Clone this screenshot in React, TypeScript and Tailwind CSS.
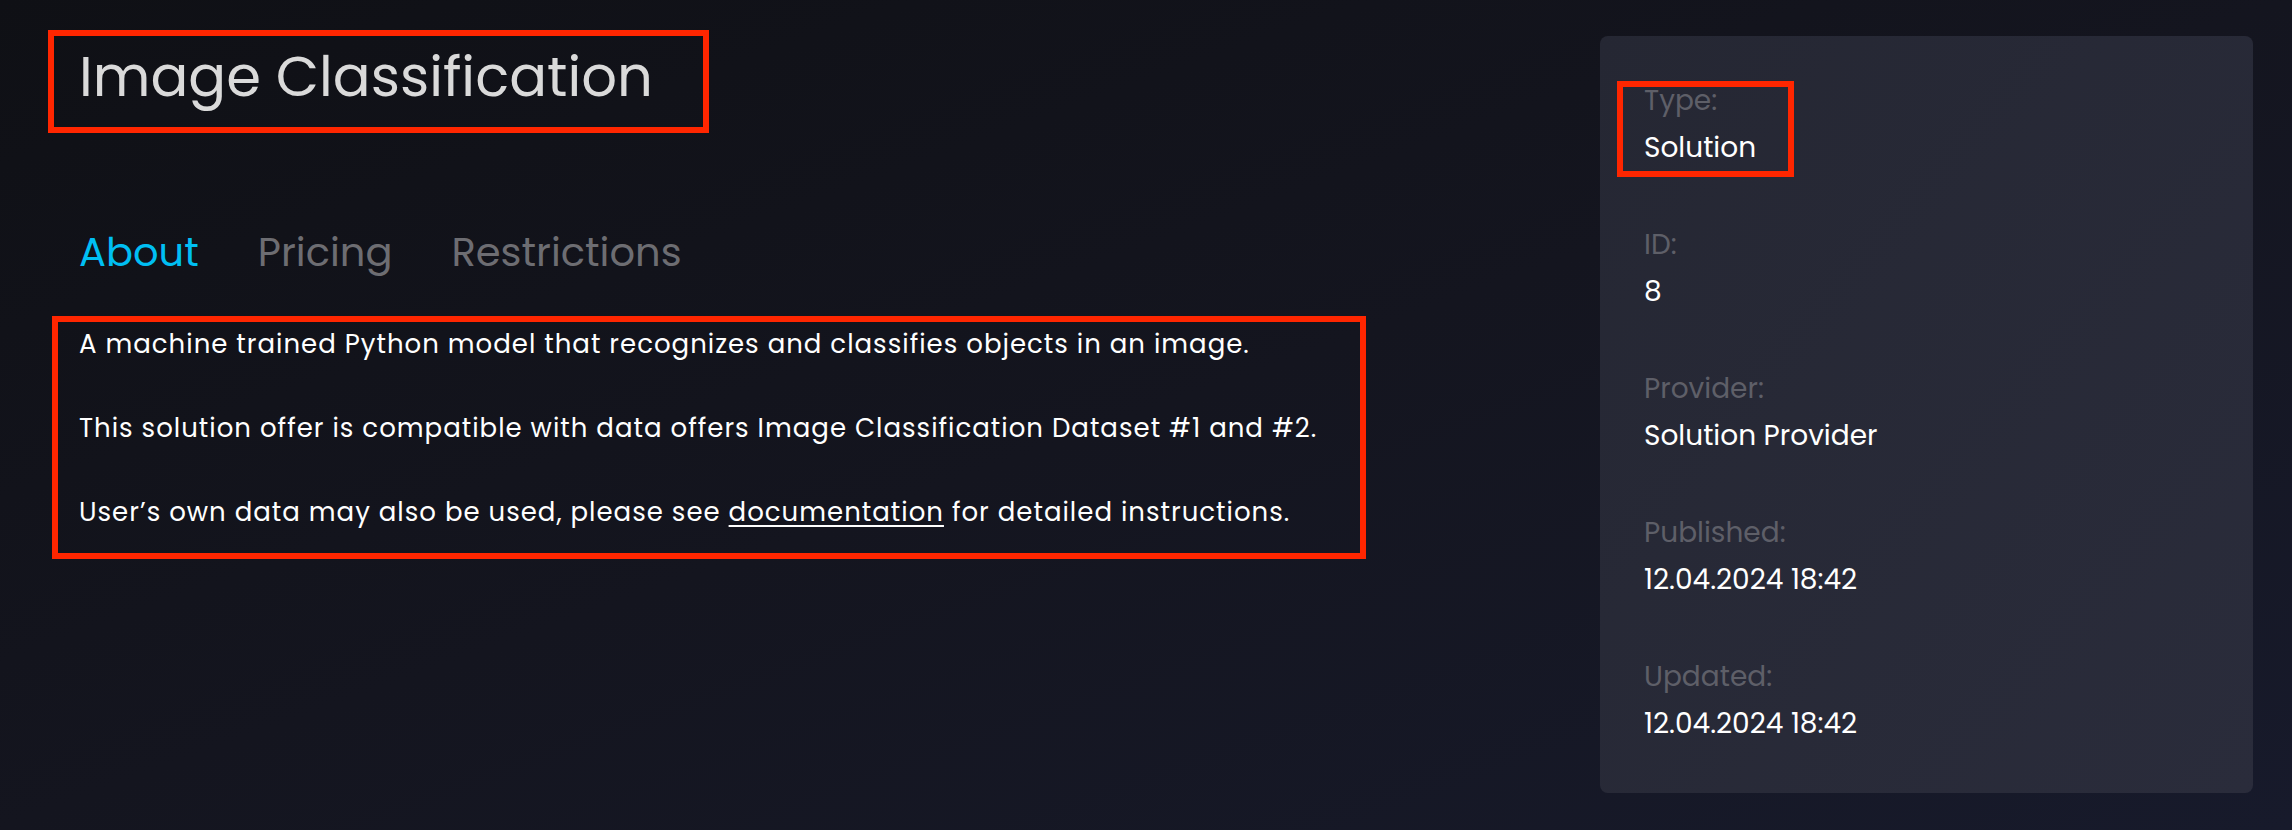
const details = [
  { label: 'Type:', value: 'Solution' },
  { label: 'ID:', value: '8' },
  { label: 'Provider:', value: 'Solution Provider' },
  { label: 'Published:', value: '12.04.2024 18:42' },
  { label: 'Updated:', value: '12.04.2024 18:42' },
];

function Highlight({ className }: { className: string }) {
  return <div className={`pointer-events-none absolute border-[6px] border-[#ff2600] ${className}`} />;
}

export default function App() {
  return (
    <div
      className="relative flex min-h-screen w-full bg-gradient-to-br from-[#0f1015] via-[#14151f] to-[#171a2b] pl-[79px] pr-[39px]"
      style={{ fontFamily: "Poppins, Inter, 'Noto Sans', sans-serif" }}
    >
      {/* Main column */}
      <div className="flex flex-1 flex-col">
        <h1 className="mt-[47px] text-[56px] leading-[60px] font-normal text-[#dadada]">Image Classification</h1>

        <nav className="mt-[121px] flex gap-[59px] text-[40px] leading-[48px]">
          <span className="text-[#00bff3]">About</span>
          <span className="text-[#6d6d72]">Pricing</span>
          <span className="text-[#6d6d72]">Restrictions</span>
        </nav>

        <div className="mt-[52px] flex flex-col gap-[52px] text-[26px] leading-[32px] tracking-[1px] text-white">
          <p>A machine trained Python model that recognizes and classifies objects in an image.</p>
          <p>This solution offer is compatible with data offers Image Classification Dataset #1 and #2.</p>
          <p>
            User’s own data may also be used, please see{' '}
            <a className="underline decoration-2 underline-offset-[4px]">documentation</a> for detailed instructions.
          </p>
        </div>
      </div>

      {/* Details panel */}
      <aside className="mt-[36px] mb-[37px] w-[653px] rounded-lg bg-gradient-to-br from-[#252733] to-[#2a2c3b] px-[44px] pt-[47px] pb-[51px]">
        <div className="flex flex-col gap-[61px]">
          {details.map((d) => (
            <div key={d.label} className="flex flex-col gap-[11px] text-[28px] leading-[36px]">
              <span className="text-[#5e5f68]">{d.label}</span>
              <span className="text-white">{d.value}</span>
            </div>
          ))}
        </div>
      </aside>

      <Highlight className="left-[48px] top-[30px] h-[103px] w-[661px]" />
      <Highlight className="left-[52px] top-[316px] h-[243px] w-[1314px]" />
      <Highlight className="left-[1617px] top-[81px] h-[96px] w-[177px]" />
    </div>
  );
}
